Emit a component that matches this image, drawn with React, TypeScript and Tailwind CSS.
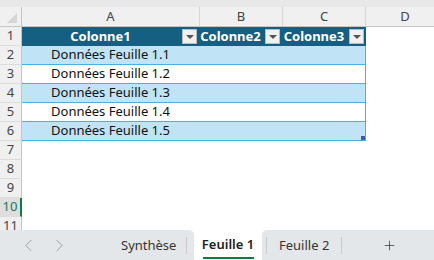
import { ChevronLeft, ChevronRight, Plus } from "lucide-react";

const font = "font-['Noto_Sans',sans-serif]";

const rows = [
  { n: 2, text: "Données Feuille 1.1", band: true },
  { n: 3, text: "Données Feuille 1.2", band: false },
  { n: 4, text: "Données Feuille 1.3", band: true },
  { n: 5, text: "Données Feuille 1.4", band: false },
  { n: 6, text: "Données Feuille 1.5", band: true },
];

const RowHeader = ({ n, selected }: { n: number; selected?: boolean }) => (
  <div
    className={
      "flex h-[19px] w-[22px] shrink-0 items-center justify-center border-b border-r border-b-[#dcdcdc] text-[13px] " +
      (selected
        ? "border-r-2 border-r-[#107c41] bg-[#dedede] text-[#137a5c]"
        : "border-r-[#c4c4c4] bg-[#f0f0f0] text-[#444]")
    }
  >
    {n}
  </div>
);

const FilterButton = () => (
  <div className="flex h-[15px] w-[15px] shrink-0 items-center justify-center border border-[#b9b9b9] bg-[#f1f1f1]">
    <div className="h-0 w-0 border-x-[4px] border-t-[4px] border-x-transparent border-t-[#555]" />
  </div>
);

const HeaderCell = ({ label, className }: { label: string; className: string }) => (
  <div className={"flex h-full items-center gap-[3px] " + className}>
    <span className="flex-1 text-center text-[13px] font-bold leading-none text-white">{label}</span>
    <FilterButton />
  </div>
);

export default function App() {
  return (
    <div className={"flex h-[260px] w-[434px] flex-col overflow-hidden bg-white " + font}>
      <div className="h-[7px] shrink-0 bg-[#e8e8e8]" />

      <div className="flex min-h-0 flex-1 flex-col overflow-hidden">
        {/* column letters */}
        <div className="flex h-[20px] shrink-0 border-b border-[#c6c6c6] bg-[#f0f0f0] text-[13px] text-[#444]">
          <div className="flex w-[22px] shrink-0 items-end justify-end border-r border-[#c4c4c4] pb-[3px] pr-[4px]">
            <div className="h-0 w-0 border-b-[10px] border-l-[10px] border-b-[#d6d6d6] border-l-transparent" />
          </div>
          <div className="flex w-[178px] shrink-0 items-center justify-center border-r border-[#d6d6d6]">A</div>
          <div className="flex w-[83px] shrink-0 items-center justify-center border-r border-[#d6d6d6]">B</div>
          <div className="flex w-[83px] shrink-0 items-center justify-center border-r border-[#d6d6d6]">C</div>
          <div className="flex w-[78px] shrink-0 items-center justify-center">D</div>
        </div>

        {/* table header */}
        <div className="flex shrink-0">
          <RowHeader n={1} />
          <div className="flex h-[19px] w-[344px] shrink-0 bg-[#156082] py-[2px]">
            <HeaderCell label="Colonne1" className="w-[177px] pr-[2px]" />
            <HeaderCell label="Colonne2" className="w-[83px] pr-[2px]" />
            <HeaderCell label="Colonne3" className="w-[84px] pr-[2px]" />
          </div>
        </div>

        {rows.map((r, i) => (
          <div key={r.n} className="flex shrink-0">
            <RowHeader n={r.n} />
            <div
              className={
                "flex h-[19px] w-[344px] shrink-0 items-end justify-between border-b border-r border-[#44b3e1] " +
                (r.band ? "bg-[#c0e4f5]" : "bg-white")
              }
            >
              <div className="flex h-full w-[177px] items-center justify-center text-[13px] text-[#111]">{r.text}</div>
              {i === rows.length - 1 && <div className="h-[4px] w-[4px] bg-[#3b5aa8]" />}
            </div>
          </div>
        ))}

        {[7, 8, 9, 10, 11].map((n) => (
          <div key={n} className="flex shrink-0">
            <RowHeader n={n} selected={n === 10} />
          </div>
        ))}
      </div>

      {/* sheet tabs */}
      <div className="flex h-[30px] shrink-0 bg-white text-[13px] text-[#333]">
        <div className="flex w-[194px] items-center rounded-tr-[5px] bg-[#e4e7ea]">
          <div className="flex w-[88px] items-center justify-center gap-[10px] text-[#9a9a9a]">
            <ChevronLeft size={21} strokeWidth={1.1} />
            <ChevronRight size={21} strokeWidth={1.1} />
          </div>
          <span className="ml-[33px] mt-[2px]">Synthèse</span>
          <div className="ml-[10px] h-[17px] w-px bg-[#c8c8c8]" />
        </div>
        <div className="flex w-[68px] flex-col items-center bg-white pt-[5px]">
          <span className="font-semibold text-[#222]">Feuille 1</span>
          <div className="mt-[2px] h-[2px] w-[51px] bg-[#107c41]" />
        </div>
        <div className="flex flex-1 items-center rounded-tl-[5px] bg-[#e4e7ea]">
          <div className="ml-[4px] h-[17px] w-px bg-[#c8c8c8]" />
          <span className="ml-[12px] mt-[2px]">Feuille 2</span>
          <div className="ml-[12px] h-[17px] w-px bg-[#c8c8c8]" />
          <Plus size={15} strokeWidth={1.3} className="ml-[40px] text-[#444]" />
        </div>
      </div>
    </div>
  );
}
